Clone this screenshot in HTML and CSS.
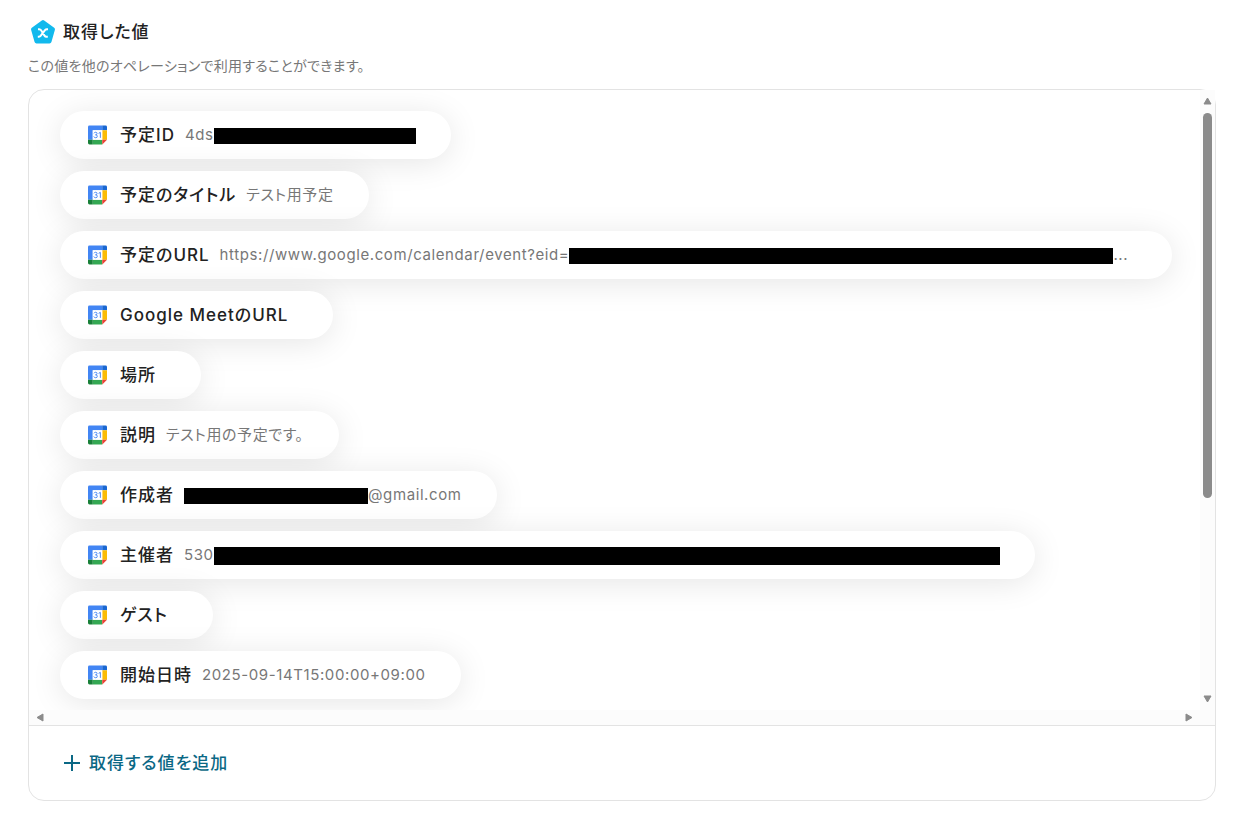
FILE: index.html
```html
<!DOCTYPE html>
<html lang="ja">
<head>
  <meta charset="UTF-8" />
  <meta name="viewport" content="width=device-width, initial-scale=1.0" />
  <title>取得した値</title>
  <link rel="stylesheet" href="styles.css">
</head>
<body>
  <svg class="defs" aria-hidden="true">
    <symbol id="calendar" viewBox="0 0 20 20">
      <path d="M1.500 0H15v5H5v10H0V1.500Q0 0 1.500 0z" fill="#4285f4"/>
      <path d="M15 0h3.500Q20 0 20 1.500V5h-5z" fill="#1967d2"/>
      <path d="M15 5h5v10h-5z" fill="#fbbc04"/>
      <path d="M5 15h10v5H5z" fill="#34a853"/>
      <path d="M0 15h5v5H1.500Q0 20 0 18.500z" fill="#188038"/>
      <path d="M15 15h5l-5 5z" fill="#ea4335"/>
      <path d="M5 5h10v10H5z" fill="#fff"/>
      <path d="M6.300 8.200Q6.800 7.100 8 7.100Q9.500 7.100 9.500 8.400Q9.500 9.800 7.900 9.800Q9.800 9.800 9.800 11.300Q9.800 12.900 8.100 12.900Q6.600 12.900 6.100 11.600M11.200 8.300L13 7.200V13" fill="none" stroke="#4285f4" stroke-width="1"/>
    </symbol>
  </svg>

  <main class="container">
    <header class="heading">
      <svg class="logo" viewBox="0 0 26 26" aria-hidden="true">
        <path d="M13 3L23 10.300L19.500 22.500H6.500L3 10.300z" fill="#12b9ed" stroke="#12b9ed" stroke-width="4" stroke-linejoin="round"/>
        <path d="M8 10.200H9.200Q10.400 10.200 11.100 11.300L14.500 16.600Q15.200 17.700 16.400 17.700H17.800M18 10.200H16.900Q15.800 10.200 15 11.200L10.800 16.700Q10 17.700 8.900 17.700H7.800" fill="none" stroke="#fff" stroke-width="2"/>
      </svg>
      <h1>取得した値</h1>
    </header>
    <p class="description">この値を他のオペレーションで利用することができます。</p>

    <section class="panel">
      <div class="scroll-area">
        <ul class="values">
          <li class="pill">
            <svg class="icon"><use href="#calendar"/></svg>
            <span class="label">予定ID</span>
            <span class="value">4ds<span class="mask mask-id"></span></span>
          </li>
          <li class="pill">
            <svg class="icon"><use href="#calendar"/></svg>
            <span class="label">予定のタイトル</span>
            <span class="value">テスト用予定</span>
          </li>
          <li class="pill">
            <svg class="icon"><use href="#calendar"/></svg>
            <span class="label">予定のURL</span>
            <span class="value value-url">https://www.google.com/calendar/event?eid=<span class="mask mask-url"></span>...</span>
          </li>
          <li class="pill">
            <svg class="icon"><use href="#calendar"/></svg>
            <span class="label">Google MeetのURL</span>
            <span class="value"></span>
          </li>
          <li class="pill">
            <svg class="icon"><use href="#calendar"/></svg>
            <span class="label">場所</span>
            <span class="value"></span>
          </li>
          <li class="pill">
            <svg class="icon"><use href="#calendar"/></svg>
            <span class="label">説明</span>
            <span class="value">テスト用の予定です。</span>
          </li>
          <li class="pill">
            <svg class="icon"><use href="#calendar"/></svg>
            <span class="label">作成者</span>
            <span class="value"><span class="mask mask-creator"></span>@gmail.com</span>
          </li>
          <li class="pill">
            <svg class="icon"><use href="#calendar"/></svg>
            <span class="label">主催者</span>
            <span class="value">530<span class="mask mask-organizer"></span></span>
          </li>
          <li class="pill">
            <svg class="icon"><use href="#calendar"/></svg>
            <span class="label">ゲスト</span>
            <span class="value"></span>
          </li>
          <li class="pill">
            <svg class="icon"><use href="#calendar"/></svg>
            <span class="label">開始日時</span>
            <span class="value">2025-09-14T15:00:00+09:00</span>
          </li>
        </ul>
        <div class="bar bar-y" aria-hidden="true">
          <svg class="arrow" viewBox="0 0 9 8"><path d="M4.500 1L8 7H1z"/></svg>
          <div class="track"><div class="thumb"></div></div>
          <svg class="arrow" viewBox="0 0 9 8"><path d="M4.500 7L1 1H8z"/></svg>
        </div>
        <div class="bar bar-x" aria-hidden="true">
          <svg class="arrow" viewBox="0 0 8 9"><path d="M1 4.500L7 1V8z"/></svg>
          <svg class="arrow" viewBox="0 0 8 9"><path d="M7 4.500L1 8V1z"/></svg>
        </div>
        <div class="bar"></div>
      </div>
      <footer class="panel-footer">
        <button type="button" class="add">
          <svg class="plus" viewBox="0 0 16 16" aria-hidden="true"><path d="M8 0V16M0 8H16" stroke="currentColor" stroke-width="2"/></svg>
          取得する値を追加
        </button>
      </footer>
    </section>
  </main>
</body>
</html>
```
FILE: styles.css
```css
* {
  box-sizing: border-box;
}
body {
  margin: 0;
  background: #fff;
  color: #222;
  font-family: Inter, "Noto Sans CJK JP", sans-serif;
  font-feature-settings: "palt";
}
.defs {
  display: none;
}
.container {
  padding: 18px 26px 14px 28px;
}
.heading {
  display: flex;
  align-items: center;
  gap: 7px;
  height: 28px;
  padding-left: 2px;
}
.logo {
  width: 26px;
  height: 26px;
}
h1 {
  margin: 0;
  font-size: 17px;
  font-weight: 500;
  line-height: 24px;
  letter-spacing: 1px;
}
.description {
  margin: 10px 0 13px;
  font-size: 14px;
  line-height: 20px;
  letter-spacing: 0.02em;
  color: #777;
}
.panel {
  border: 1px solid #e3e3e3;
  border-radius: 16px;
}
.scroll-area {
  display: grid;
  grid-template-columns: 1fr 15px;
  grid-template-rows: 620px 15px;
  border-bottom: 1px solid #e3e3e3;
}
.values {
  display: flex;
  flex-direction: column;
  align-items: flex-start;
  gap: 12px;
  min-width: 0;
  margin: 0;
  padding: 21px 31px;
  border-top-left-radius: 15px;
  list-style: none;
  overflow: hidden;
}
.pill {
  display: flex;
  flex-shrink: 0;
  align-items: center;
  height: 48px;
  padding: 0 35px 0 28px;
  border-radius: 24px;
  background: #fff;
  box-shadow: 0 4px 32px rgba(0, 0, 0, 0.1);
  line-height: 24px;
  white-space: nowrap;
}
.icon {
  width: 19px;
  height: 20px;
  margin-right: 13px;
}
.label {
  margin-right: 10px;
  font-size: 17px;
  font-weight: 500;
  letter-spacing: 1px;
}
.value {
  font-size: 15px;
  color: #777;
  letter-spacing: 0.04em;
}
.value-url {
  margin-right: 9px;
}
.mask {
  display: inline-block;
  height: 16px;
  background: #000;
  vertical-align: -4px;
}
.mask-id {
  width: 202px;
}
.mask-url {
  width: 544px;
}
.mask-creator {
  width: 184px;
}
.mask-organizer {
  width: 786px;
  height: 18px;
  vertical-align: -5px;
}
.bar {
  display: flex;
  align-items: center;
  justify-content: space-between;
  background: #fcfcfc;
}
.bar-y {
  flex-direction: column;
  padding: 7px 0;
}
.bar-x {
  padding: 0 7px;
}
.arrow {
  width: 9px;
  height: 8px;
  fill: #8b8b8b;
  stroke: #8b8b8b;
  stroke-linejoin: round;
}
.bar-x .arrow {
  width: 8px;
  height: 9px;
}
.track {
  flex: 1;
  padding: 8px 0;
}
.thumb {
  width: 9px;
  height: 67%;
  border-radius: 5px;
  background: #8b8b8b;
}
.panel-footer {
  padding: 21px 35px;
}
.add {
  display: flex;
  align-items: center;
  gap: 9px;
  height: 32px;
  padding: 0;
  border: 0;
  background: none;
  color: #0b6885;
  font-family: inherit;
  font-feature-settings: inherit;
  font-size: 17px;
  font-weight: 500;
  line-height: 24px;
  letter-spacing: 1px;
  cursor: pointer;
}
.plus {
  width: 16px;
  height: 16px;
}
```
